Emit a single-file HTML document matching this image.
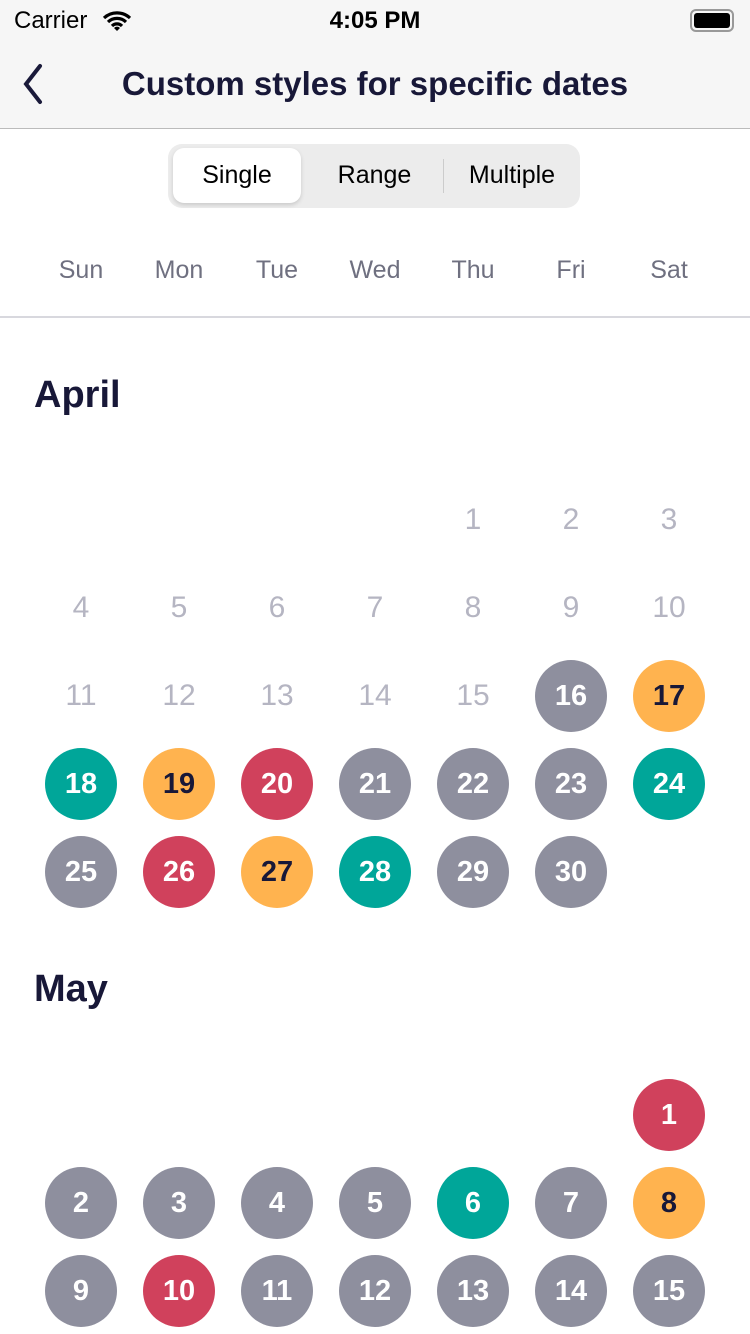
<!DOCTYPE html>
<html><head><meta charset="utf-8"><style>
body{margin:0;width:750px;height:1334px;overflow:hidden;background:#fff;font-family:"Liberation Sans",sans-serif;position:relative}
.a{position:absolute}
.d{position:absolute;width:72px;height:72px;margin:-35px 0 0 -36px;border-radius:50%;display:flex;align-items:center;justify-content:center;font-size:30px;color:#fff}
.f{color:#b5b5c2}
.g,.o,.t,.r{font-weight:bold;font-size:29px}
.g{background:#8e8f9e}.o{background:#ffb34f;color:#181838}.t{background:#00a699}.r{background:#d0415c}
.w{position:absolute;width:98px;margin-left:-49px;text-align:center;font-size:25px;color:#6f7080;top:256px}
</style></head><body>
<div class="a" style="left:0;top:0;width:750px;height:128px;background:#f6f6f6;border-bottom:1px solid #bbb"></div>
<div class="a" style="left:14px;top:7px;font-size:24px;color:#000">Carrier</div>
<svg class="a" style="left:102px;top:10px" width="30" height="22" viewBox="0 0 30 22"><path d="M2 8a19 19 0 0 1 26 0M6 12a13 13 0 0 1 18 0M10 16a7 7 0 0 1 10 0" stroke="#000" stroke-width="3.2" fill="none"/><path d="M12 18l3 3l3-3a4 4 0 0 0-6 0z"/></svg>
<div class="a" style="left:0;width:750px;top:7px;text-align:center;font-size:24px;font-weight:bold">4:05 PM</div>
<div class="a" style="left:690px;top:9px;width:40px;height:19px;border:2px solid #999;border-radius:6px"></div>
<div class="a" style="left:694px;top:13px;width:36px;height:15px;background:#000;border-radius:3px"></div>
<svg class="a" style="left:14px;top:63px" width="30" height="42"><path d="M26 3L12 21L26 39" stroke="#1a1a3a" stroke-width="4" fill="none" stroke-linecap="round"/></svg>
<div class="a" style="left:0;width:750px;top:65px;text-align:center;font-size:33px;font-weight:bold;color:#181838">Custom styles for specific dates</div>
<div class="a" style="left:168px;top:144px;width:412px;height:64px;background:#ececec;border-radius:14px"></div>
<div class="a" style="left:173px;top:148px;width:128px;height:55px;background:#fff;border-radius:11px;box-shadow:0 2px 4px rgba(0,0,0,.15)"></div>
<div class="a" style="left:443px;top:159px;width:1px;height:34px;background:#ccc"></div>
<div class="a" style="left:173px;width:128px;top:161px;text-align:center;font-size:25px;font-weight:500">Single</div>
<div class="a" style="left:306px;width:137px;top:161px;text-align:center;font-size:25px">Range</div>
<div class="a" style="left:444px;width:136px;top:161px;text-align:center;font-size:25px">Multiple</div>
<div class="w" style="left:81px">Sun</div><div class="w" style="left:179px">Mon</div><div class="w" style="left:277px">Tue</div><div class="w" style="left:375px">Wed</div><div class="w" style="left:473px">Thu</div><div class="w" style="left:571px">Fri</div><div class="w" style="left:669px">Sat</div>
<div class="a" style="left:0;top:316px;width:750px;height:2px;background:#d8d8de"></div>
<div class="a" style="left:34px;top:374px;font-size:38px;font-weight:bold;color:#181838">April</div>
<div class="a" style="left:34px;top:968px;font-size:38px;font-weight:bold;color:#181838">May</div>
<div id="c"></div>
<script>
var X=[81,179,277,375,473,571,669],h='';
function add(n,col,y,cls){h+='<div class="d '+cls+'" style="left:'+X[col]+'px;top:'+y+'px">'+n+'</div>';}
var ap={16:'g',17:'o',18:'t',19:'o',20:'r',21:'g',22:'g',23:'g',24:'t',25:'g',26:'r',27:'o',28:'t',29:'g',30:'g'};
for(var d=1;d<=30;d++){var i=d+3;add(d,i%7,519+88*Math.floor(i/7),ap[d]||'f');}
var my=['r','g','g','g','g','t','g','o','g','r','g','g','g','g','g'];
for(var d=1;d<=15;d++){var i=d+5;add(d,i%7,1114+88*Math.floor(i/7),my[d-1]);}
document.getElementById('c').innerHTML=h;
</script>
</body></html>
